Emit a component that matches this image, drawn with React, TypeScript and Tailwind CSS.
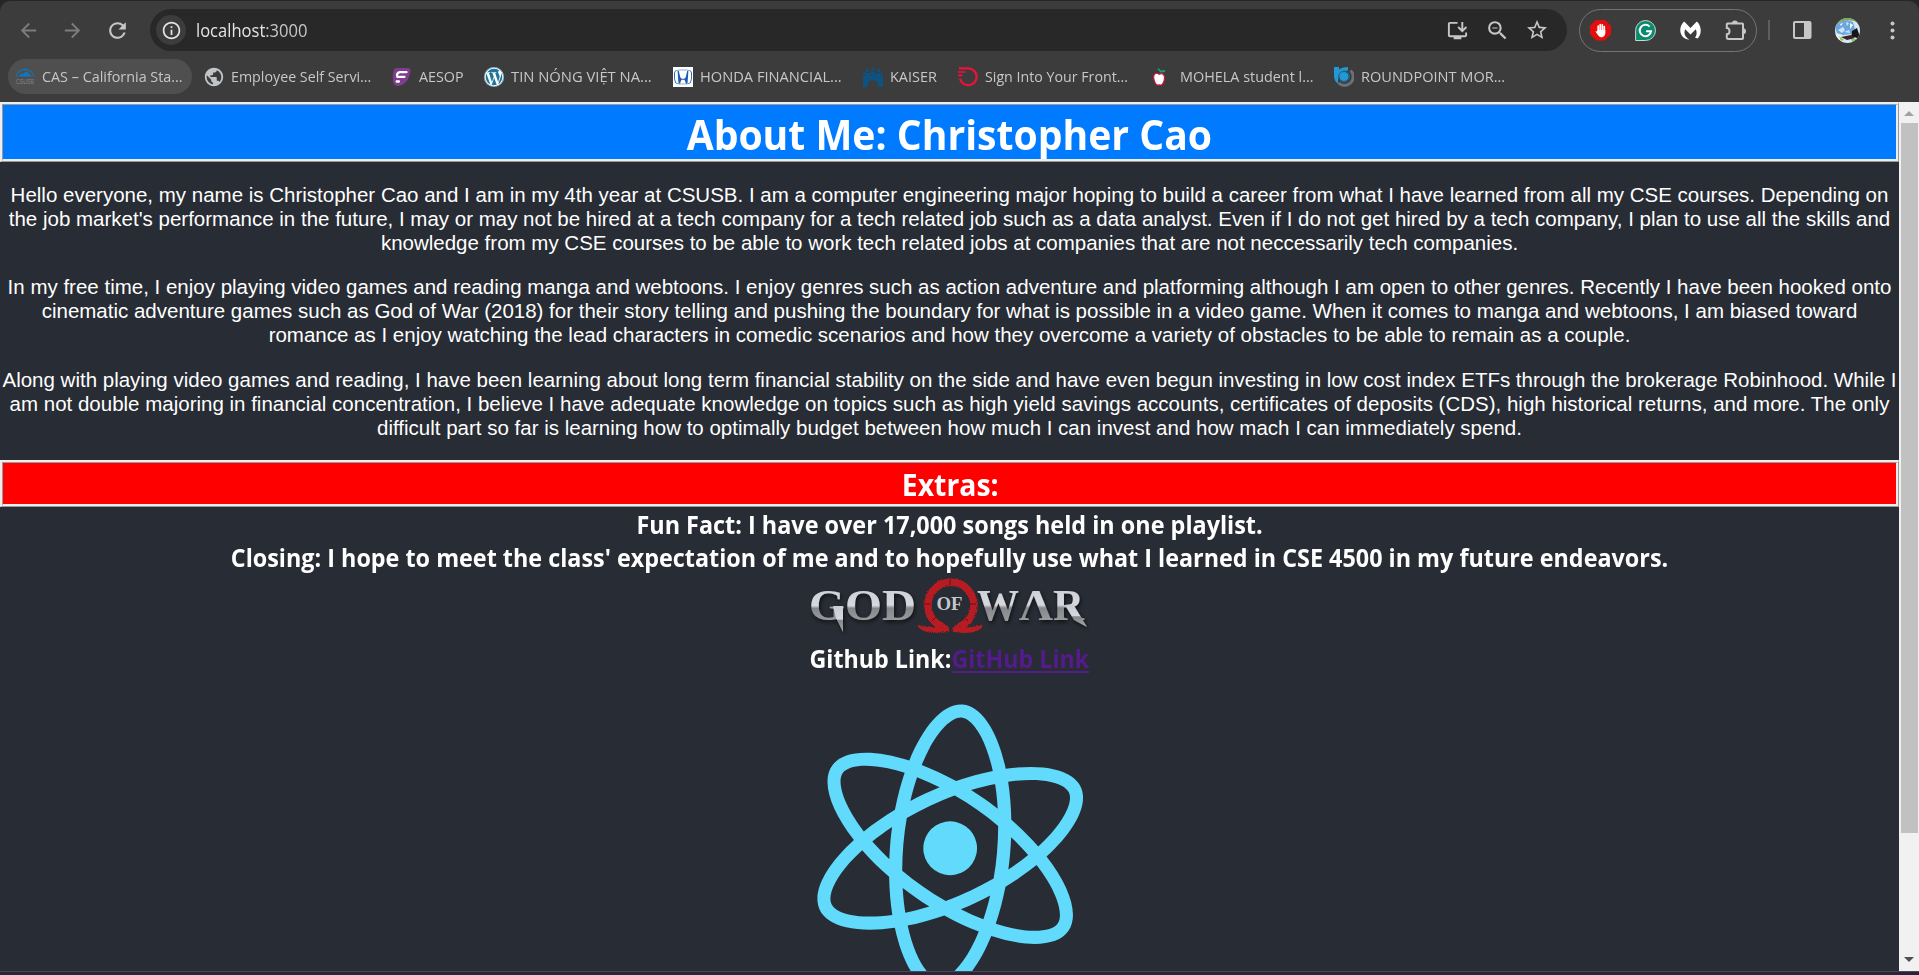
import type { ReactNode } from 'react';
import { MdArrowBack, MdArrowForward, MdInfoOutline, MdInstallDesktop, MdPublic, MdRefresh, MdStarBorder, MdZoomOut } from 'react-icons/md';
import { FaWordpress } from 'react-icons/fa';
import { SiHonda, SiReact } from 'react-icons/si';

const UI = "font-['Segoe_UI','Open_Sans',sans-serif]";

function ToolbarRow() {
  return (
    <div className="flex h-[58px] items-center">
      <div className="flex w-[150px] shrink-0 items-center pl-[16px]">
        <div className="flex w-[24px] justify-center text-[#7c7c7c]"><MdArrowBack size={23} /></div>
        <div className="ml-[20px] flex w-[24px] justify-center text-[#7c7c7c]"><MdArrowForward size={23} /></div>
        <div className="ml-[21px] flex w-[25px] justify-center text-[#c7c7c7]"><MdRefresh size={25} /></div>
      </div>
      <div className="flex h-[42px] w-[1417px] shrink-0 items-center rounded-full bg-[#282828] pl-[6px]">
        <div className="flex size-[30px] items-center justify-center rounded-full bg-[#3c3c3c] text-[#e3e3e3]">
          <MdInfoOutline size={21} />
        </div>
        <div className="ml-[10px] w-[1080px] text-[17.5px] leading-[24px] whitespace-nowrap text-[#e3e3e3]">
          <span className="inline-block origin-left scale-x-[0.945]">
            localhost<span className="text-[#c7c7c7]">:3000</span>
          </span>
        </div>
        <div className="ml-[170px] flex items-center text-[#c7c7c7]">
          <MdInstallDesktop size={23} />
          <MdZoomOut size={25} className="ml-[16px]" />
          <MdStarBorder size={24} className="ml-[15px]" />
        </div>
      </div>
      <div className="ml-[12px] flex h-[43px] w-[178px] shrink-0 items-center rounded-full border border-[#757575] pl-[10px]">
        <div className="flex size-[21px] items-center justify-center bg-[#e40d0d] text-white [clip-path:polygon(30%_0,70%_0,100%_30%,100%_70%,70%_100%,30%_100%,0_70%,0_30%)]">
          <svg width="12" height="15" viewBox="0 0 12 15" fill="none" stroke="#fff" strokeWidth="1.700" strokeLinecap="round">
            <path d="M3.200 8V3.200M5.200 8V1.500M7.300 8V1.800M9.300 8V3.500" />
            <path d="M2.800 7.500H10V10Q9.500 14 6.500 14 4.500 14 3.300 12L1 8.800" fill="#fff" strokeWidth=".8" />
          </svg>
        </div>
        <svg className="ml-[24px]" width="21" height="21" viewBox="0 0 21 21">
          <path d="M10.5 .5a10 10 0 1 1 0 20H.6V10.5a10 10 0 0 1 9.9-10Z" fill="#0c8a6e" stroke="#c5d8d2" strokeWidth="1" />
          <path d="M14.6 6.6a5.7 5.7 0 1 0 1.5 4.6h-5" fill="none" stroke="#fff" strokeWidth="2" />
        </svg>
        <svg className="ml-[24px]" width="21" height="19" viewBox="0 0 21 19">
          <path d="M4.200.4 10.500 7 16.800.4C21.600 4.400 22.200 13 17.500 17.600L15 16.500C17 14 17 11 15.800 8.200L10.500 13.400 5.200 8.200C3.200 12.500 5.400 16.500 9.400 18.500 2 18.700-.3 12 .4 7.500.8 4.600 2 2.200 4.200.4Z" fill="#fff" />
        </svg>
        <svg className="ml-[24px]" width="22" height="22" viewBox="0 0 22 22">
          <path d="M2.500 4.500H17.200Q18 4.500 18 5.300V19.200Q18 20 17.200 20H3.300Q1.800 20 1.800 18.800V15.300C5.400 15 5.400 9.400 1.800 9.100V5.300Q1.800 4.500 2.500 4.500Z" fill="none" stroke="#c7c7c7" strokeWidth="2" />
          <path d="M6.900 4.500a3 3 0 0 1 6 0ZM18 9.200a3 3 0 0 1 0 6Z" fill="#c7c7c7" />
        </svg>
      </div>
      <div className="ml-[11px] h-[20px] w-[2px] bg-[#5e5e5e]" />
      <svg className="ml-[23px]" width="19" height="18" viewBox="0 0 19 18">
        <rect x="1" y="1" width="16.500" height="16" rx="1" fill="none" stroke="#c7c7c7" strokeWidth="2" />
        <rect x="11" y="1" width="7" height="16" fill="#c7c7c7" />
      </svg>
      <svg className="ml-[23px]" width="25" height="25" viewBox="0 0 25 25">
        <clipPath id="avatar"><circle cx="12.500" cy="12.500" r="12.500" /></clipPath>
        <g clipPath="url(#avatar)">
          <rect width="25" height="25" fill="#d7e6f5" />
          <path d="M0 0H25V6L19 3 12 2 5 4 0 9Z" fill="#7fa653" />
          <path d="M5 4l7-2 6 2 2 7-4 5-8 1-6-2-2-6Z" fill="#6aa7de" />
          <path d="M3 12l5-3 2 3-3 3ZM11 4l3 1-2 3ZM9 14l5-2 1 3Z" fill="#cfe4f7" />
          <path d="M15 5l3 2-3 4ZM5 6l3-1-2 3Z" fill="#fff" />
          <path d="M0 16l6 1 3 8H0Z" fill="#eef3ea" />
          <path d="M17 13l5-3 2 6 1 5-6-2-3 2Z" fill="#15151a" />
          <path d="M6 19l10-2 4 3-8 2Z" fill="#3a2624" />
          <path d="M4 18l5 4-3 1ZM16 21l6 0-4 4Z" fill="#8cc152" />
        </g>
      </svg>
      <svg className="ml-[30px]" width="5" height="19" viewBox="0 0 5 19" fill="#c7c7c7">
        <circle cx="2.500" cy="2.500" r="2" /><circle cx="2.500" cy="9.500" r="2" /><circle cx="2.500" cy="16.500" r="2" />
      </svg>
    </div>
  );
}

type Bookmark = { label: string; icon: ReactNode; slot: string; stretch: string };

const bookmarks: Bookmark[] = [
  {
    label: 'CAS – California Sta...', slot: 'w-[189px]', stretch: 'scale-x-[0.957]',
    icon: (
      <svg width="20" height="20" viewBox="0 0 20 20" className="overflow-visible">
        <path d="M1.200 9.500C3 0 17 0 18.800 9.500" fill="none" stroke="#0b78bf" strokeWidth="1.300" />
        <path d="M3 9.500l3.500-3 1.500.5L11 4.300 14 6.500l3 3Z" fill="#0b78bf" />
        <text x="1" y="16.500" fontSize="6.500" textLength="18" lengthAdjust="spacingAndGlyphs" fill="#858585" fontFamily="Liberation Sans">CSUSB</text>
      </svg>
    ),
  },
  { label: 'Employee Self Servi...', slot: 'w-[188px]', stretch: 'scale-x-[0.950]', icon: <MdPublic size={22} className="-ml-px shrink-0 text-[#c0c5ca]" /> },
  {
    label: 'AESOP', slot: 'w-[92px]', stretch: 'scale-x-[0.955]',
    icon: (
      <svg width="20" height="20" viewBox="0 0 20 20">
        <path d="M5 1H15.500Q19 1 18.500 4C17.500 12 13 18.500 6 19Q1.500 19 1 14Q.3 9 1.500 4 2 1 5 1Z" fill="#7d3f8c" />
        <path d="M14.500 5.200H8.200Q5.600 5.200 5 8M12.500 9.800H5.200M4.700 14.500H7" fill="none" stroke="#fff" strokeWidth="2.300" strokeLinecap="round" />
      </svg>
    ),
  },
  {
    label: 'TIN NÓNG VIỆT NA...', slot: 'w-[189px]', stretch: 'scale-x-[0.984]',
    icon: <span className="flex size-5 items-center justify-center rounded-full bg-white text-[#21759b]"><FaWordpress size={20} /></span>,
  },
  {
    label: 'HONDA FINANCIAL...', slot: 'w-[190px]', stretch: 'scale-x-[0.976]',
    icon: <span className="flex size-5 items-center justify-center bg-white text-[#1c5bb0]"><SiHonda size={18} /></span>,
  },
  {
    label: 'KAISER', slot: 'w-[95px]', stretch: 'scale-x-[0.965]',
    icon: (
      <svg width="20" height="20" viewBox="0 0 20 20" fill="#0c5282">
        <circle cx="10" cy="2" r="1.700" /><circle cx="4.500" cy="3.500" r="1.700" /><circle cx="15.500" cy="3.500" r="1.700" /><circle cx="1.500" cy="6.500" r="1.400" /><circle cx="18.500" cy="6.500" r="1.400" />
        <path d="M0 20V9H3V6H7V9H8V4.500H12V9H13V6H17V9H20V20H15.500Q15 13 10 13T4.500 20Z" />
      </svg>
    ),
  },
  {
    label: 'Sign Into Your Front...', slot: 'w-[195px]', stretch: 'scale-x-[0.948]',
    icon: (
      <svg width="20" height="20" viewBox="0 0 20 20" fill="none" stroke="#f0103c">
        <path d="M1 1.400H10.500A8.400 8.400 0 1 1 2 11.500" strokeWidth="2.300" />
        <path d="M0 5H7.500M0 8.400H4.500" strokeWidth="1.700" />
      </svg>
    ),
  },
  {
    label: 'MOHELA student l...', slot: 'w-[181px]', stretch: 'scale-x-[0.960]',
    icon: (
      <svg width="20" height="20" viewBox="0 0 20 20">
        <path d="M6 7.200C2.500 4.800 0 7.500.8 11.500 1.500 16 3.500 19 6.200 17.800 9 19 11 16 11.500 11.500 11.800 7.500 9.500 5.400 6 7.200Z" fill="#fff" stroke="#d3123c" strokeWidth="1.200" />
        <path d="M5 1.500l3 3.500M7.500 4.500l4.500-.5" stroke="#1d9b75" strokeWidth="1.800" />
      </svg>
    ),
  },
  {
    label: 'ROUNDPOINT MOR...', slot: 'w-[200px]', stretch: 'scale-x-[0.970]',
    icon: (
      <svg width="20" height="20" viewBox="0 0 20 20" fill="none">
        <path d="M16.500 3.500A8.200 8.200 0 1 1 4.500 16" stroke="#6c7076" strokeWidth="3" />
        <path d="M0 0H5V2.500Q8 0 14 0V3.500Q4 4 4 14L4.500 17Q0 14 0 9Z" fill="#2299d6" />
        <circle cx="10" cy="9.500" r="4.600" fill="#2299d6" />
        <circle cx="10" cy="9.500" r="5.500" stroke="#1c6a94" strokeWidth="1" />
      </svg>
    ),
  },
];

function BookmarksRow() {
  return (
    <div className="flex h-[42px] items-start">
      {bookmarks.map((b, i) => (
        <div key={b.label} className={`${b.slot} ${i === 0 ? 'ml-[8px]' : ''} shrink-0`}>
          <div className={`flex h-[35px] items-center pl-[7px] ${i === 0 ? 'w-[184px] rounded-full bg-[#4f4f4f]' : ''}`}>
            <span className="flex w-5 shrink-0 items-center">{b.icon}</span>
            <span className={`ml-[7px] inline-block origin-left pb-[2px] text-[15px] leading-[20px] whitespace-nowrap text-[#c7c7c7] ${b.stretch}`}>{b.label}</span>
          </div>
        </div>
      ))}
    </div>
  );
}

function RidgeBar({ color, height, children }: { color: string; height: string; children: ReactNode }) {
  return (
    <div className="border-t-2 border-r border-b border-l-2 border-t-[#eeeeee] border-r-[#9a9a9a] border-b-[#9a9a9a] border-l-[#eeeeee]">
      <div className={`flex items-center justify-center overflow-hidden border-t border-r-2 border-b-2 border-l border-t-[#9a9a9a] border-r-[#eeeeee] border-b-[#eeeeee] border-l-[#9a9a9a] ${color} ${height}`}>
        {children}
      </div>
    </div>
  );
}

const paragraphs = [
  [
    'Hello everyone, my name is Christopher Cao and I am in my 4th year at CSUSB. I am a computer engineering major hoping to build a career from what I have learned from all my CSE courses. Depending on',
    "the job market's performance in the future, I may or may not be hired at a tech company for a tech related job such as a data analyst. Even if I do not get hired by a tech company, I plan to use all the skills and",
    'knowledge from my CSE courses to be able to work tech related jobs at companies that are not neccessarily tech companies.',
  ],
  [
    'In my free time, I enjoy playing video games and reading manga and webtoons. I enjoy genres such as action adventure and platforming although I am open to other genres. Recently I have been hooked onto',
    'cinematic adventure games such as God of War (2018) for their story telling and pushing the boundary for what is possible in a video game. When it comes to manga and webtoons, I am biased toward',
    'romance as I enjoy watching the lead characters in comedic scenarios and how they overcome a variety of obstacles to be able to remain as a couple.',
  ],
  [
    'Along with playing video games and reading, I have been learning about long term financial stability on the side and have even begun investing in low cost index ETFs through the brokerage Robinhood. While I',
    'am not double majoring in financial concentration, I believe I have adequate knowledge on topics such as high yield savings accounts, certificates of deposits (CDS), high historical returns, and more. The only',
    'difficult part so far is learning how to optimally budget between how much I can invest and how mach I can immediately spend.',
  ],
];

function GodOfWarLogo() {
  return (
    <svg width="280" height="67" viewBox="0 0 280 67" className="shrink-0">
      <defs>
        <linearGradient id="steel" x1="0" y1="0" x2="0" y2="1">
          <stop offset="0" stopColor="#c9ccd4" />
          <stop offset=".5" stopColor="#d6d8de" />
          <stop offset=".56" stopColor="#85878c" />
          <stop offset="1" stopColor="#a9a9a9" />
        </linearGradient>
        <filter id="drop" x="-10%" y="-20%" width="120%" height="160%">
          <feDropShadow dx="1" dy="2" stdDeviation="2" floodColor="#000" floodOpacity=".7" />
        </filter>
        <filter id="rough"><feTurbulence baseFrequency=".5" numOctaves="2" /><feDisplacementMap in="SourceGraphic" scale="2.500" /></filter>
      </defs>
      <g filter="url(#rough)" fill="none" stroke="#b81d22">
        <path d="M131 50.500A23 23 0 1 1 149 50.500" strokeWidth="7.500" />
        <path d="M131 47Q134 52 128 52.500L107 50.500Q114 59 138 55.500L137 51ZM149 47Q146 52 152 52.500L172 50Q166 59 142 55.500L143 51Z" fill="#b81d22" strokeWidth="1" />
      </g>
      <path d="M140 4v6M114 29h6M160 29h6M122 46l4-4M158 46l-4-4" stroke="#5e1015" strokeWidth="1" />
      <g filter="url(#drop)" fill="url(#steel)" fontFamily="'Liberation Serif'" fontWeight="700">
        <text x="-1" y="45" fontSize="44" textLength="36" lengthAdjust="spacingAndGlyphs">G</text>
        <text x="35" y="45" fontSize="44" textLength="37" lengthAdjust="spacingAndGlyphs">O</text>
        <text x="72" y="44.500" fontSize="44" textLength="34" lengthAdjust="spacingAndGlyphs">D</text>
        <path d="M23 31H33V57L26 43Z" />
        <text x="167" y="44.500" fontSize="44" textLength="42" lengthAdjust="spacingAndGlyphs">W</text>
        <text x="209" y="44.500" fontSize="44" textLength="34" lengthAdjust="spacingAndGlyphs">Λ</text>
        <text x="243" y="44.500" fontSize="44" textLength="31" lengthAdjust="spacingAndGlyphs">R</text>
        <path d="M255 30L263 29 277 52 264 45Z" />
      </g>
      <text x="126.500" y="35" fontSize="19" textLength="26" lengthAdjust="spacingAndGlyphs" fill="#c4c6cb" fontFamily="'Liberation Serif'" fontWeight="700">OF</text>
    </svg>
  );
}

function Page() {
  return (
    <main className="h-[869px] w-[1899px] overflow-hidden bg-[#282c34] text-center text-white">
      <RidgeBar color="bg-[#007bff]" height="h-[57px]">
        <h1 className="scale-x-[0.954] pt-[4px] text-[41px] leading-[54px] font-bold whitespace-nowrap">About Me: Christopher Cao</h1>
      </RidgeBar>
      <div className="flex flex-col gap-[20.5px] py-[20.5px] font-['Liberation_Sans',sans-serif] text-[20.5px] leading-[24px] whitespace-nowrap">
        {paragraphs.map((lines) => (
          <p key={lines[0]}>
            {lines.map((line) => <span key={line} className="flex justify-center">{line}</span>)}
          </p>
        ))}
      </div>
      <RidgeBar color="bg-[#ff0000]" height="h-[44px]">
        <h2 className="ml-[2px] scale-x-[0.945] pt-[2px] text-[30px] leading-[41px] font-bold whitespace-nowrap">Extras:</h2>
      </RidgeBar>
      <div className="flex flex-col items-center pt-px text-[25px] leading-[33.3px] font-bold whitespace-nowrap">
        <h3 className="scale-x-[0.936]">Fun Fact: I have over 17,000 songs held in one playlist.</h3>
        <h3 className="scale-x-[0.934]">Closing: I hope to meet the class&apos; expectation of me and to hopefully use what I learned in CSE 4500 in my future endeavors.</h3>
        <GodOfWarLogo />
        <h3 className="scale-x-[0.930]">
          Github Link:<a href="#github" className="text-[#551a8b] underline decoration-2 underline-offset-[3px]">GitHub Link</a>
        </h3>
        <div className="-mt-[2px] flex h-[350px] items-center pl-[2px]">
          <SiReact size={288.5} className="rotate-[35deg] text-[#61dafb]" />
        </div>
      </div>
    </main>
  );
}

function Scrollbar() {
  return (
    <div className="flex h-[869px] w-[20px] flex-col items-center bg-[#f1f1f1]">
      <div className="flex h-[21px] items-center pt-[2px]">
        <svg width="10" height="5" viewBox="0 0 10 5"><path d="M0 5 5 0l5 5Z" fill="#a3a3a3" /></svg>
      </div>
      <div className="ml-px h-[710px] w-[17px] bg-[#c1c1c1]" />
      <div className="mt-auto flex h-[23px] items-center">
        <svg width="10" height="5" viewBox="0 0 10 5"><path d="M0 0 5 5l5-5Z" fill="#505050" /></svg>
      </div>
    </div>
  );
}

export default function App() {
  return (
    <div className={`flex h-[975px] w-[1919px] flex-col overflow-hidden bg-[#2b2438] ${UI}`}>
      <div className="h-[102px] shrink-0 bg-[#262626] pt-px">
        <header className="h-[101px] rounded-t-[10px] bg-[#3c3c3c]">
          <ToolbarRow />
          <BookmarksRow />
        </header>
      </div>
      <div className="flex h-[869px] shrink-0">
        <Page />
        <Scrollbar />
      </div>
      <div className="h-px shrink-0 bg-[#4b4854]" />
    </div>
  );
}
